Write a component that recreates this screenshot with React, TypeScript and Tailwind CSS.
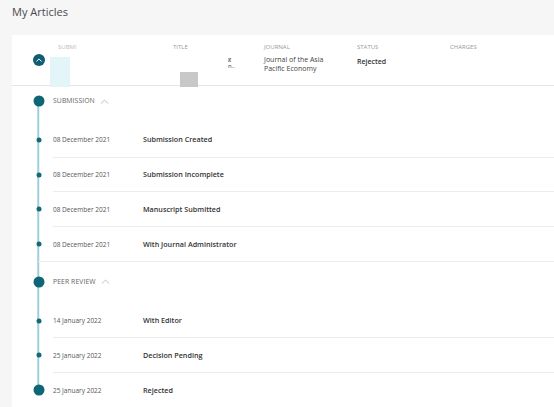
import React from "react";

type Row = { date: string; label: string };

const Chevron = ({ className, sw = "1" }: { className: string; sw?: string }) => (
  <svg viewBox="0 0 10 6" className={className} fill="none" stroke="currentColor" strokeWidth={sw} strokeLinecap="round" strokeLinejoin="round">
    <path d="M1 5.2 L5 1.2 L9 5.2" />
  </svg>
);

function TimelineRow({ row, last, divider, dividerWide }: { row: Row; last?: boolean; divider?: boolean; dividerWide?: boolean }) {
  return (
    <div className="relative">
      <div className="flex h-[33.7px] items-center">
        <div className="relative h-full w-[41px] shrink-0">
          <div className={`absolute left-[26px] w-[1.5px] -translate-x-1/2 bg-[#9fcfd9] top-0 ${last ? "h-[17px]" : "bottom-0"}`} />
          {last ? (
            <div className="absolute left-[26.5px] top-[17px] h-[11px] w-[11px] -translate-x-1/2 -translate-y-1/2 rounded-full bg-[#0d6576]" />
          ) : (
            <div className="absolute left-[26.5px] top-[17px] h-[5px] w-[5px] -translate-x-1/2 -translate-y-1/2 rounded-full bg-[#14687a]" />
          )}
        </div>
        <div className="w-[90px] shrink-0 pt-[1px] text-[6.5px] text-[#555]">{row.date}</div>
        <div className="text-[7.2px] font-semibold text-[#333]">{row.label}</div>
      </div>
      {divider && (
        <div className="flex h-[1px]">
          <div className="relative w-[41px] shrink-0">
            <div className="absolute left-[26px] top-0 bottom-0 w-[1.5px] -translate-x-1/2 bg-[#9fcfd9]" />
            {dividerWide && <div className="absolute left-[26px] right-0 top-0 h-[1px] bg-[#ececec]" />}
          </div>
          <div className="h-[1px] flex-1 bg-[#ececec]" />
        </div>
      )}
    </div>
  );
}

function SectionHeader({ title, first, h, top }: { title: string; first?: boolean; h: string; top: string }) {
  return (
    <div className={`flex ${h}`}>
      <div className="relative w-[41px] shrink-0">
        <div className={`absolute left-[26px] w-[1.5px] -translate-x-1/2 bg-[#9fcfd9] bottom-0 ${first ? top : "top-0"}`} />
        <div className={`absolute left-[26.5px] ${top} h-[11px] w-[11px] -translate-x-1/2 -translate-y-1/2 rounded-full bg-[#0d6576]`} />
      </div>
      <div className={`relative flex items-center gap-[5px] ${top} -translate-y-1/2 h-[10px]`}>
        <span className="text-[6.8px] uppercase tracking-[0.1px] text-[#666]">{title}</span>
        <Chevron className="h-[5px] w-[9px] text-[#b5b5b5]" />
      </div>
    </div>
  );
}

export default function App() {
  const submission: Row[] = [
    { date: "08 December 2021", label: "Submission Created" },
    { date: "08 December 2021", label: "Submission Incomplete" },
    { date: "08 December 2021", label: "Manuscript Submitted" },
    { date: "08 December 2021", label: "With Journal Administrator" },
  ];
  const peer: Row[] = [
    { date: "14 January 2022", label: "With Editor" },
    { date: "25 January 2022", label: "Decision Pending" },
  ];
  return (
    <div className="h-[407px] overflow-hidden bg-[#f6f6f6] font-['Open_Sans',sans-serif]">
      <div className="flex h-[35px] items-start pl-[12px] pt-[4px]">
        <h1 className="text-[11px] text-[#4a4a4a]">My Articles</h1>
      </div>
      <div className="ml-[12px] bg-white">
        {/* header row */}
        <div className="relative flex h-[51px] border-b border-[#e6e6e6]">
          <div className="relative w-[46px] shrink-0">
            <div className="absolute left-[27px] top-[25px] flex h-[12px] w-[12px] -translate-x-1/2 -translate-y-1/2 items-center justify-center rounded-full bg-[#0f5d72]">
              <Chevron className="h-[4px] w-[6px] text-white" sw="1.6" />
            </div>
          </div>
          <div className="w-[115px] shrink-0 pt-[8px] text-[6px] uppercase text-[#bbb]">Submi</div>
          <div className="relative w-[91px] shrink-0 pt-[8px]">
            <div className="text-[6px] uppercase text-[#999]">Title</div>
            <div className="absolute left-[55px] top-[21px] flex flex-col gap-[1px] text-[6px] leading-[6px] text-[#444]">
              <span>g</span>
              <span>n..</span>
            </div>
          </div>
          <div className="w-[93px] shrink-0 pt-[8px]">
            <div className="text-[6px] uppercase text-[#999]">Journal</div>
            <div className="mt-[3px] text-[7px] leading-[9px] text-[#444]">
              Journal of the Asia
              <br />
              Pacific Economy
            </div>
          </div>
          <div className="w-[93px] shrink-0 pt-[8px]">
            <div className="text-[6px] uppercase text-[#999]">Status</div>
            <div className="mt-[5px] text-[7px] font-semibold text-[#333]">Rejected</div>
          </div>
          <div className="pt-[8px]">
            <div className="text-[6px] uppercase text-[#999]">Charges</div>
          </div>
          {/* redaction marks */}
          <div className="absolute left-[38px] top-[22px] h-[30px] w-[20px] bg-[#e3f5f8]" />
          <div className="absolute left-[168px] top-[37px] h-[15px] w-[18px] bg-[#c8c8c8]" />
        </div>

        <SectionHeader title="Submission" first h="h-[37px]" top="top-[15px]" />
        {submission.map((r, i) => (
          <TimelineRow key={i} row={r} divider dividerWide={i === submission.length - 1} />
        ))}
        <SectionHeader title="Peer Review" h="h-[42px]" top="top-[20px]" />
        {peer.map((r, i) => (
          <TimelineRow key={i} row={r} divider />
        ))}
        <TimelineRow row={{ date: "25 January 2022", label: "Rejected" }} last />
      </div>
    </div>
  );
}
